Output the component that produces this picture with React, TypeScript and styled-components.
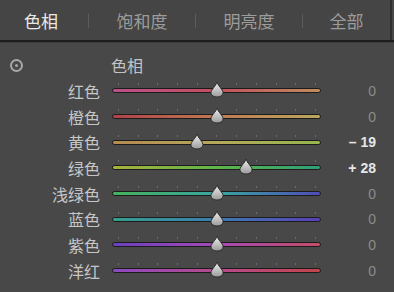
import styled, { createGlobalStyle } from 'styled-components';

const GlobalStyle = createGlobalStyle`
  html, body {
    margin: 0;
    padding: 0;
    background: #484848;
  }
  body {
    font-family: "Noto Sans CJK SC", "Noto Sans", sans-serif;
  }
`;

const Panel = styled.div`
  width: 394px;
  height: 292px;
  background: #484848;
  overflow: hidden;
`;

const TabBar = styled.div`
  height: 40px;
  display: flex;
  align-items: center;
  background: #454545;
  border-right: 2px solid #303030;
  width: 390px;
`;

const Tab = styled.div<{ $active?: boolean; $width: number; $shift?: number }>`
  width: ${({ $width }) => $width}px;
  text-align: center;
  font-size: 17px;
  line-height: 40px;
  padding-top: 2px;
  padding-right: ${({ $shift = 0 }) => $shift}px;
  box-sizing: border-box;
  color: ${({ $active }) => ($active ? '#e8e8e8' : '#9c9c9c')};
`;

const TabDivider = styled.div`
  width: 1px;
  height: 14px;
  margin-top: 2px;
  background: #5c5c5c;
`;

const Rule = styled.div`
  height: 2px;
  background: #1d1d1d;
  border-bottom: 1px solid #3c3c3c;
`;

const Body = styled.div`
  padding-top: 9px;
`;

const SectionHead = styled.div`
  height: 26px;
  display: grid;
  grid-template-columns: 100px 1fr;
  column-gap: 11px;
  align-items: center;
`;

const Target = styled.div`
  width: 9px;
  height: 9px;
  margin-left: 10px;
  border: 2px solid #a8a8a8;
  border-radius: 50%;
  display: flex;
  align-items: center;
  justify-content: center;

  &::after {
    content: '';
    width: 3px;
    height: 3px;
    border-radius: 50%;
    background: #a8a8a8;
  }
`;

const SectionTitle = styled.div`
  font-size: 16px;
  color: #c4c4c4;
`;

const Row = styled.div`
  height: 25.7px;
  display: grid;
  grid-template-columns: 100px 209px 55px;
  column-gap: 12px;
  align-items: center;
`;

const Label = styled.div`
  text-align: right;
  font-size: 16px;
  color: #c6c6c6;
  line-height: 20px;
`;

const TrackWrap = styled.div`
  position: relative;
  height: 25px;
  display: flex;
  align-items: center;
`;

const Track = styled.div<{ $from: string; $mid: string; $to: string }>`
  width: 100%;
  height: 3px;
  border: 1.5px solid #1c1c1c;
  border-radius: 4px;
  background: linear-gradient(
    to right,
    ${({ $from }) => $from},
    ${({ $mid }) => $mid},
    ${({ $to }) => $to}
  );
`;

const Ticks = styled.div`
  position: absolute;
  left: 6px;
  right: 5px;
  top: 5px;
  display: flex;
  justify-content: space-between;
`;

const Tick = styled.span`
  width: 1px;
  height: 2px;
  background: #6c6c6c;
`;

const Thumb = styled.svg`
  position: absolute;
  top: 3px;
  width: 14px;
  height: 17px;
  margin-left: -7px;
`;

const Value = styled.div<{ $zero: boolean }>`
  text-align: right;
  font-family: "Liberation Sans", Arial, sans-serif;
  font-size: 14px;
  font-weight: ${({ $zero }) => ($zero ? 400 : 700)};
  color: ${({ $zero }) => ($zero ? '#8c8c8c' : '#e6e6e6')};
  padding-right: 12px;
`;

type Channel = {
  label: string;
  value: number;
  colors: [string, string, string];
};

const CHANNELS: Channel[] = [
  { label: '红色', value: 0, colors: ['#b8508a', '#c44f5e', '#bf8d5c'] },
  { label: '橙色', value: 0, colors: ['#b0414a', '#c07a52', '#b9a85e'] },
  { label: '黄色', value: -19, colors: ['#b58a52', '#b5a85a', '#95b54c'] },
  { label: '绿色', value: 28, colors: ['#a8b23c', '#5fb54a', '#2f9e78'] },
  { label: '浅绿色', value: 0, colors: ['#45b25a', '#3aa6a0', '#4e4db8'] },
  { label: '蓝色', value: 0, colors: ['#33a08c', '#3c7cb0', '#5a3fb8'] },
  { label: '紫色', value: 0, colors: ['#6a40c0', '#a44ab4', '#c44c66'] },
  { label: '洋红', value: 0, colors: ['#8c4ac0', '#b84a8c', '#c4444c'] },
];

const formatValue = (v: number) => {
  if (v > 0) return `+ ${v}`;
  if (v < 0) return `\u2013 ${Math.abs(v)}`;
  return '0';
};

const SliderRow = ({ label, value, colors }: Channel, index: number) => {
  const pct = 50 + value / 2;
  return (
    <Row key={`row-${index}`}>
      <Label>{label}</Label>
      <TrackWrap>
        <Ticks>
          {Array.from({ length: 11 }).map((_, i) => (
            <Tick key={i} />
          ))}
        </Ticks>
        <Track $from={colors[0]} $mid={colors[1]} $to={colors[2]} />
        <Thumb viewBox="0 0 14 17" style={{ left: `${pct}%` }}>
          <defs>
            <linearGradient id={`thumb-${index}`} x1="0" y1="0" x2="0" y2="1">
              <stop offset="0" stopColor="#f2f2f2" />
              <stop offset="1" stopColor="#9a9a9a" />
            </linearGradient>
          </defs>
          <path
            d="M7 1 C8 5 13 8.5 13 11.5 C13 14.5 10 16 7 16 C4 16 1 14.5 1 11.5 C1 8.5 6 5 7 1 Z"
            fill={`url(#thumb-${index})`}
            stroke="#2a2a2a"
            strokeWidth="1"
          />
        </Thumb>
      </TrackWrap>
      <Value $zero={value === 0}>{formatValue(value)}</Value>
    </Row>
  );
};

const App = () => {
  return (
    <>
      <GlobalStyle />
      <Panel>
        <TabBar>
          <Tab $active $width={88} $shift={6}>色相</Tab>
          <TabDivider />
          <Tab $width={106}>饱和度</Tab>
          <TabDivider />
          <Tab $width={106}>明亮度</Tab>
          <TabDivider />
          <Tab $width={87}>全部</Tab>
        </TabBar>
        <Rule />
        <Body>
          <SectionHead>
            <Target />
            <SectionTitle>色相</SectionTitle>
          </SectionHead>
          {CHANNELS.map(SliderRow)}
        </Body>
      </Panel>
    </>
  );
};

export default App;
